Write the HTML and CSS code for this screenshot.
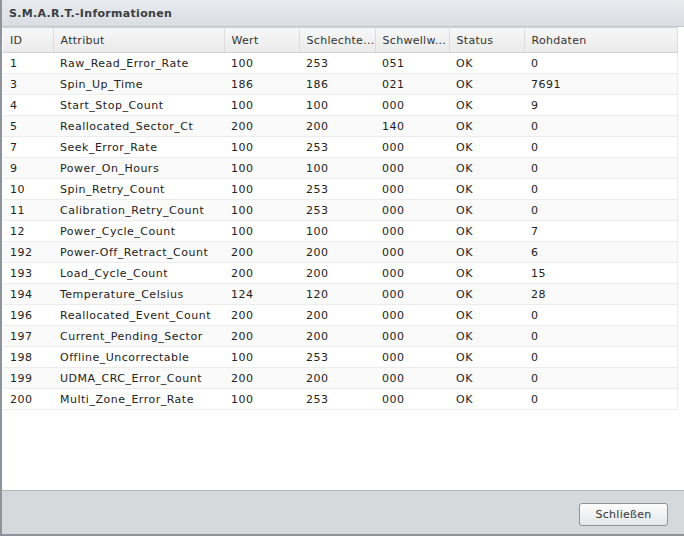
FILE: index.html
```html
<!DOCTYPE html>
<html lang="de">
<head>
<meta charset="UTF-8">
<title>S.M.A.R.T.-Informationen</title>
<link rel="stylesheet" href="styles.css">
</head>
<body>
<div class="dialog">
  <div class="titlebar">S.M.A.R.T.-Informationen</div>
  <div class="grid-wrap">
    <table class="grid">
      <colgroup>
        <col class="c-id"><col class="c-attr"><col class="c-wert"><col class="c-schl">
        <col class="c-schw"><col class="c-stat"><col class="c-raw">
      </colgroup>
      <thead>
        <tr>
          <th>ID</th><th>Attribut</th><th>Wert</th><th>Schlechte...</th>
          <th>Schwellw...</th><th>Status</th><th>Rohdaten</th>
        </tr>
      </thead>
      <tbody>
        <tr><td>1</td><td>Raw_Read_Error_Rate</td><td>100</td><td>253</td><td>051</td><td>OK</td><td>0</td></tr>
        <tr><td>3</td><td>Spin_Up_Time</td><td>186</td><td>186</td><td>021</td><td>OK</td><td>7691</td></tr>
        <tr><td>4</td><td>Start_Stop_Count</td><td>100</td><td>100</td><td>000</td><td>OK</td><td>9</td></tr>
        <tr><td>5</td><td>Reallocated_Sector_Ct</td><td>200</td><td>200</td><td>140</td><td>OK</td><td>0</td></tr>
        <tr><td>7</td><td>Seek_Error_Rate</td><td>100</td><td>253</td><td>000</td><td>OK</td><td>0</td></tr>
        <tr><td>9</td><td>Power_On_Hours</td><td>100</td><td>100</td><td>000</td><td>OK</td><td>0</td></tr>
        <tr><td>10</td><td>Spin_Retry_Count</td><td>100</td><td>253</td><td>000</td><td>OK</td><td>0</td></tr>
        <tr><td>11</td><td>Calibration_Retry_Count</td><td>100</td><td>253</td><td>000</td><td>OK</td><td>0</td></tr>
        <tr><td>12</td><td>Power_Cycle_Count</td><td>100</td><td>100</td><td>000</td><td>OK</td><td>7</td></tr>
        <tr><td>192</td><td>Power-Off_Retract_Count</td><td>200</td><td>200</td><td>000</td><td>OK</td><td>6</td></tr>
        <tr><td>193</td><td>Load_Cycle_Count</td><td>200</td><td>200</td><td>000</td><td>OK</td><td>15</td></tr>
        <tr><td>194</td><td>Temperature_Celsius</td><td>124</td><td>120</td><td>000</td><td>OK</td><td>28</td></tr>
        <tr><td>196</td><td>Reallocated_Event_Count</td><td>200</td><td>200</td><td>000</td><td>OK</td><td>0</td></tr>
        <tr><td>197</td><td>Current_Pending_Sector</td><td>200</td><td>200</td><td>000</td><td>OK</td><td>0</td></tr>
        <tr><td>198</td><td>Offline_Uncorrectable</td><td>100</td><td>253</td><td>000</td><td>OK</td><td>0</td></tr>
        <tr><td>199</td><td>UDMA_CRC_Error_Count</td><td>200</td><td>200</td><td>000</td><td>OK</td><td>0</td></tr>
        <tr><td>200</td><td>Multi_Zone_Error_Rate</td><td>100</td><td>253</td><td>000</td><td>OK</td><td>0</td></tr>
      </tbody>
    </table>
  </div>
  <div class="footer">
    <button class="btn">Schließen</button>
  </div>
</div>
</body>
</html>
```
FILE: styles.css
```css
body {
  margin: 0;
  padding: 0;
  font-family: Verdana, "DejaVu Sans", sans-serif;
  font-size: 11px;
  letter-spacing: 0.5px;
  color: #222;
  background-color: #fff;
}

.dialog {
  width: 684px;
  height: 536px;
  box-sizing: border-box;
  display: flex;
  flex-direction: column;
  border-left: 2px solid #8e949a;
  border-bottom: 2px solid #8e949a;
}

.titlebar {
  height: 26px;
  line-height: 28px;
  padding-left: 7px;
  font-weight: bold;
  font-size: 11px;
  letter-spacing: 0.3px;
  color: #3a3e42;
  background: linear-gradient(#e8ebee, #dadee2);
  border-bottom: 1px solid #c2c6ca;
}

.grid-wrap {
  flex: 1;
  background-color: #fff;
  padding-left: 1px;
}

.grid {
  border-collapse: collapse;
  table-layout: fixed;
  width: 674px;
}

.c-id { width: 50px; }
.c-attr { width: 171px; }
.c-wert { width: 75px; }
.c-schl { width: 76px; }
.c-schw { width: 74px; }
.c-stat { width: 75px; }
.c-raw { width: 153px; }

.grid th {
  height: 24px;
  padding: 0 0 0 7px;
  text-align: left;
  font-weight: normal;
  letter-spacing: 0.3px;
  color: #333;
  background: linear-gradient(#f7f7f7, #ebebeb);
  border-top: 1px solid #d8d8d8;
  border-bottom: 1px solid #d0d0d0;
  border-right: 1px solid #dcdcdc;
  white-space: nowrap;
  overflow: hidden;
}

.grid td {
  height: 20px;
  padding: 0 5px 0 7px;
  border-bottom: 1px solid #ececec;
  white-space: nowrap;
  overflow: hidden;
}

.grid tbody tr {
  background-color: #fff;
}

.grid tbody tr:nth-child(even) {
  background-color: #fafafa;
}

.grid tbody td:last-child {
  border-right: 1px solid #ececec;
}

.footer {
  height: 44px;
  box-sizing: border-box;
  border-top: 1px solid #b4b8bc;
  background-color: #d5d9dc;
  display: flex;
  justify-content: flex-end;
  align-items: flex-start;
  padding: 12px 16px 0 0;
}

.btn {
  width: 89px;
  height: 23px;
  font-family: Verdana, "DejaVu Sans", sans-serif;
  font-size: 11px;
  letter-spacing: 0.3px;
  color: #333;
  border: 1px solid #8f9499;
  border-radius: 3px;
  background: linear-gradient(#fdfdfd, #e4e6e8);
  cursor: pointer;
}
```
